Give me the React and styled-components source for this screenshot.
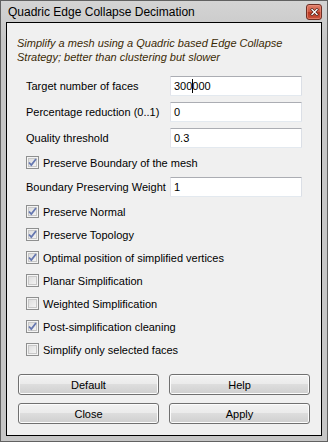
import React from "react";
import styled, { createGlobalStyle } from "styled-components";

const Global = createGlobalStyle`
  html, body { margin: 0; padding: 0; background: #c9c9c9; }
  * { box-sizing: border-box; }
`;

const Window = styled.div`
  width: 328px;
  height: 442px;
  border: 1px solid #616161;
  background: linear-gradient(#d4d4d4, #c6c6c6 40px, #c6c6c6);
  padding: 0 5px 5px 5px;
  display: flex;
  flex-direction: column;
  font-family: "Liberation Sans", Arial, sans-serif;
`;

const TitleBar = styled.div`
  height: 21px;
  flex: none;
  display: flex;
  align-items: center;
  padding-left: 2px;
`;

const Title = styled.div`
  font-size: 12px;
  color: #000;
  padding-top: 1px;
`;

const CloseBtn = styled.div`
  margin-left: auto;
  width: 16px;
  height: 16px;
  border: 1px solid #6e2e24;
  border-radius: 3px;
  background: linear-gradient(#e0806c, #cc5640 50%, #b83620 51%, #c9523c);
  box-shadow: inset 0 0 0 1px rgba(240, 150, 130, 0.6);
  display: flex;
  align-items: center;
  justify-content: center;
`;

const Client = styled.div`
  flex: 1;
  border: 1px solid #000;
  background: #f0f0f0;
  display: flex;
  flex-direction: column;
  padding: 13px 11px 0 10px;
  font-size: 11px;
  color: #000;
`;

const Description = styled.div`
  font-style: italic;
  line-height: 14px;
  color: #3b2a05;
  margin-bottom: 12px;
`;

const Form = styled.div`
  display: flex;
  flex-direction: column;
  gap: 6px;
  padding-left: 9px;
  padding-right: 8px;
`;

const FieldRow = styled.div`
  height: 20px;
  display: flex;
  align-items: center;
`;

const Label = styled.div`
  width: 144px;
  flex: none;
  white-space: nowrap;
`;

const Input = styled.div`
  flex: 1;
  height: 20px;
  background: #fff;
  border: 1px solid;
  border-color: #abadb3 #dbdfe6 #e3e9ef #e2e3ea;
  border-radius: 1px;
  padding: 0 3px;
  display: flex;
  align-items: center;
  white-space: nowrap;
`;

const Caret = styled.span`
  display: inline-block;
  width: 1px;
  height: 14px;
  margin-right: -1px;
  background: #000;
  position: relative;
  z-index: 1;
`;

const CheckRow = styled.div`
  height: 17px;
  display: flex;
  align-items: center;
  gap: 4px;
`;

const Box = styled.div`
  width: 13px;
  height: 13px;
  flex: none;
  border: 1px solid #8e8f8f;
  box-shadow: inset 0 0 0 1px #f4f4f4, inset 0 0 0 2px #c8c8c8;
  background-image: linear-gradient(135deg, #d8d8d8, #f9f9f9);
  position: relative;
`;

const Check = styled.svg`
  position: absolute;
  left: 0;
  top: 0;
`;

const Buttons = styled.div`
  margin-top: 16px;
  display: grid;
  grid-template-columns: 1fr 1fr;
  column-gap: 10px;
  row-gap: 8px;
  padding-left: 1px;
`;

const Button = styled.div`
  height: 21px;
  border: 1px solid #707070;
  border-radius: 3px;
  background: linear-gradient(#f2f2f2, #ebebeb 45%, #dddddd 50%, #cfcfcf);
  box-shadow: inset 0 0 0 1px #fcfcfc;
  display: flex;
  align-items: center;
  justify-content: center;
  font-size: 11px;
  color: #000;
`;

function CheckBox({ label, checked }) {
  return (
    <CheckRow>
      <Box>
        {checked && (
          <Check width="11" height="11" viewBox="0 0 11 11">
            <path d="M2 5.5 L4.3 8 L9 2" fill="none" stroke="#6577b0" strokeWidth="1.8" />
          </Check>
        )}
      </Box>
      <span>{label}</span>
    </CheckRow>
  );
}

function Field({ label, children }) {
  return (
    <FieldRow>
      <Label>{label}</Label>
      <Input>{children}</Input>
    </FieldRow>
  );
}

export default function App() {
  return (
    <>
      <Global />
      <Window>
        <TitleBar>
          <Title>Quadric Edge Collapse Decimation</Title>
          <CloseBtn>
            <svg width="9" height="8" viewBox="0 0 9 8">
              <path d="M2 1.5 L7 6.5 M7 1.5 L2 6.5" stroke="#4a2019" strokeWidth="2.6" strokeLinecap="square" />
              <path d="M2 1.5 L7 6.5 M7 1.5 L2 6.5" stroke="#fff" strokeWidth="1.3" strokeLinecap="square" />
            </svg>
          </CloseBtn>
        </TitleBar>
        <Client>
          <Description>
            Simplify a mesh using a Quadric based Edge Collapse
            <br />
            Strategy; better than clustering but slower
          </Description>
          <Form>
            <Field label="Target number of faces">
              300<Caret />000
            </Field>
            <Field label="Percentage reduction (0..1)">0</Field>
            <Field label="Quality threshold">0.3</Field>
            <CheckBox label="Preserve Boundary of the mesh" checked />
            <Field label="Boundary Preserving Weight">1</Field>
            <CheckBox label="Preserve Normal" checked />
            <CheckBox label="Preserve Topology" checked />
            <CheckBox label="Optimal position of simplified vertices" checked />
            <CheckBox label="Planar Simplification" />
            <CheckBox label="Weighted Simplification" />
            <CheckBox label="Post-simplification cleaning" checked />
            <CheckBox label="Simplify only selected faces" />
          </Form>
          <Buttons>
            <Button>Default</Button>
            <Button>Help</Button>
            <Button>Close</Button>
            <Button>Apply</Button>
          </Buttons>
        </Client>
      </Window>
    </>
  );
}
